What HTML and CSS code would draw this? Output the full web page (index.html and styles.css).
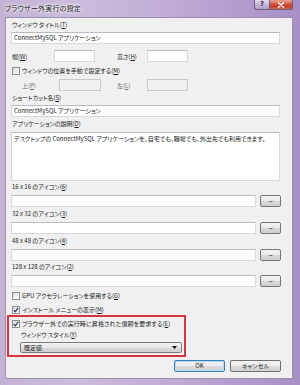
FILE: index.html
```html
<!DOCTYPE html>
<html lang="ja">
<head>
<meta charset="utf-8">
<title>ブラウザー外実行の設定</title>
<link rel="stylesheet" href="styles.css">
</head>
<body>
<div class="window">
  <div class="titlebar">
    <span class="title">ブラウザー外実行の設定</span>
    <div class="caption">
      <span class="cap-help">?</span>
      <span class="cap-close">
        <svg width="8" height="6" viewBox="0 0 8 6"><path d="M1.5 0.8 L6.5 5.2 M6.5 0.8 L1.5 5.2" stroke="#fff" stroke-width="1.4" stroke-linecap="round"/></svg>
      </span>
    </div>
  </div>
  <div class="client">
    <div class="lbl l-title">ウィンドウ タイトル(<u>T</u>)</div>
    <div class="tb t-title">ConnectMySQL アプリケーション</div>

    <div class="row r-size">
      <span class="rl rl-w">幅(<u>W</u>)</span>
      <div class="tb small"></div>
      <span class="rl rl-h">高さ(<u>H</u>)</span>
      <div class="tb small"></div>
    </div>

    <div class="crow cr-pos">
      <span class="cb"></span>
      <span class="ctext">ウィンドウの位置を手動で設定する(<u>M</u>)</span>
    </div>

    <div class="row r-pos">
      <span class="rl dis rl-p">上(<u>P</u>)</span>
      <div class="tb small dis-tb wide1"></div>
      <span class="rl dis rl-l">左(<u>L</u>)</span>
      <div class="tb small dis-tb"></div>
    </div>

    <div class="lbl l-short">ショートカット名(<u>S</u>)</div>
    <div class="tb t-short">ConnectMySQL アプリケーション</div>

    <div class="lbl l-desc">アプリケーションの説明(<u>D</u>)</div>
    <div class="tb area">デスクトップの ConnectMySQL アプリケーションを、自宅でも、職場でも、外出先でも利用できます。</div>

    <div class="lbl l-i16">16 x 16 のアイコン(<u>6</u>)</div>
    <div class="row r-icon">
      <div class="tb grow"></div>
      <span class="dots">...</span>
    </div>
    <div class="lbl l-icon">32 x 32 のアイコン(<u>3</u>)</div>
    <div class="row r-icon">
      <div class="tb grow"></div>
      <span class="dots">...</span>
    </div>
    <div class="lbl l-icon">48 x 48 のアイコン(<u>4</u>)</div>
    <div class="row r-icon">
      <div class="tb grow"></div>
      <span class="dots">...</span>
    </div>
    <div class="lbl l-i128">128 x 128 のアイコン(<u>2</u>)</div>
    <div class="row r-icon">
      <div class="tb grow"></div>
      <span class="dots">...</span>
    </div>

    <div class="crow cr-gpu">
      <span class="cb"></span>
      <span class="ctext">GPU アクセラレーションを使用する(<u>G</u>)</span>
    </div>
    <div class="crow cr-inst">
      <span class="cb">
        <svg width="6" height="6" viewBox="0 0 6 6"><path d="M0.8 3.2 L2.3 4.9 L5.2 0.9" fill="none" stroke="#2a3a6e" stroke-width="1.2"/></svg>
      </span>
      <span class="ctext">インストール メニューの表示(<u>M</u>)</span>
    </div>

    <div class="redbox">
      <div class="crow cr-elev">
        <span class="cb">
          <svg width="6" height="6" viewBox="0 0 6 6"><path d="M0.8 3.2 L2.3 4.9 L5.2 0.9" fill="none" stroke="#2a3a6e" stroke-width="1.2"/></svg>
        </span>
        <span class="ctext">ブラウザー外での実行時に昇格された信頼を要求する(<u>E</u>)</span>
      </div>
      <div class="lbl l-style">ウィンドウ スタイル(<u>Y</u>)</div>
      <div class="select">
        <span>既定値</span>
        <svg width="5" height="3" viewBox="0 0 5 3"><path d="M0 0 H5 L2.5 3 Z" fill="#000"/></svg>
      </div>
    </div>

    <div class="buttons">
      <span class="btn default">OK</span>
      <span class="btn">キャンセル</span>
    </div>
  </div>
</div>
</body>
</html>
```

FILE: styles.css
```css
html, body {
  margin: 0;
  padding: 0;
}
body {
  width: 300px;
  height: 385px;
  overflow: hidden;
  font-family: "Noto Sans CJK JP", "Noto Sans", sans-serif;
  font-feature-settings: "palt";
  color: #1a1a1a;
}
u { text-decoration-thickness: 0.5px; text-underline-offset: 1px; }

.window {
  width: 300px;
  height: 385px;
  box-sizing: border-box;
  padding: 0 7px 6px 5px;
  display: flex;
  flex-direction: column;
  background: linear-gradient(to right, #c3b2d6 0%, #cbbcdc 25%, #bea9d4 60%, #a78fc4 100%);
}

.titlebar {
  height: 17px;
  display: flex;
  align-items: flex-start;
  flex: none;
}
.title {
  font-size: 7px;
  line-height: 17px;
  color: #111;
  letter-spacing: 0.2px;
  text-shadow: 0 0 2px #fff, 0 0 3px #fff, 0 0 4px #fff;
}
.caption {
  margin-left: auto;
  display: flex;
}
.cap-help, .cap-close {
  height: 10px;
  box-sizing: border-box;
  border: 1px solid #6d5f80;
  border-top: none;
  display: flex;
  align-items: center;
  justify-content: center;
}
.cap-help {
  width: 15px;
  border-right: none;
  border-bottom-left-radius: 3px;
  background: linear-gradient(#e6deee, #c3b6d3 50%, #b0a1c4);
  font-size: 7px;
  font-weight: bold;
  color: #3a3050;
  line-height: 9px;
  font-family: "DejaVu Sans", sans-serif;
}
.cap-close {
  width: 24px;
  border-bottom-right-radius: 3px;
  background: linear-gradient(#e9a393, #d0503c 50%, #c23a28 75%, #d66a50);
}

.client {
  flex: 1;
  background: #f0f0f0;
  border: 1px solid #9a8fae;
  display: flex;
  flex-direction: column;
  padding: 0 12px 0 5px;
  font-size: 6px;
}

.lbl {
  height: 8px;
  line-height: 8px;
  margin-left: 1px;
  white-space: nowrap;
}
.tb {
  height: 12px;
  box-sizing: border-box;
  border: 1px solid #d6d8dd;
  border-top-color: #b9bcc4;
  background: #fff;
  line-height: 10px;
  padding-left: 2px;
  white-space: nowrap;
  overflow: hidden;
}

.l-title { margin-top: 3px; }
.t-title { margin-top: 3px; }

.row {
  display: flex;
  align-items: center;
  height: 12px;
}
.rl { white-space: nowrap; }
.small { width: 41px; }
.r-size { margin-top: 6px; }
.rl-w { margin-left: 1px; width: 42px; }
.rl-h { margin-left: 22px; width: 30px; }

.crow {
  display: flex;
  align-items: center;
  height: 9px;
}
.cb {
  width: 8px;
  height: 8px;
  box-sizing: border-box;
  border: 1px solid #8f8f8f;
  background: linear-gradient(135deg, #d8d8d8, #f4f4f4 70%, #fff);
  margin-left: 1px;
  display: flex;
  align-items: center;
  justify-content: center;
  flex: none;
}
.ctext {
  margin-left: 2px;
  white-space: nowrap;
}
.cr-pos { margin-top: 4px; }

.r-pos { margin-top: 4px; }
.dis { color: #6d6d6d; }
.dis-tb {
  background: #f0f0f0;
  border-color: #c8c8c8;
}
.rl-p { margin-left: 11px; width: 37px; }
.wide1 { width: 42px; }
.rl-l { margin-left: 16px; width: 30px; }

.l-short { margin-top: 3px; }
.t-short { margin-top: 3px; }
.l-desc { margin-top: 3px; }
.area {
  margin-top: 4px;
  height: 49px;
  line-height: 9px;
  padding-top: 1px;
}

.l-i16 { margin-top: 2px; }
.l-icon { margin-top: 3px; }
.l-i128 { margin-top: 2px; }
.r-icon { margin-top: 4px; }
.grow { flex: 1; }
.dots {
  width: 21px;
  height: 12px;
  margin-left: 4px;
  margin-right: -1px;
  box-sizing: border-box;
  border: 1px solid #767676;
  border-radius: 2px;
  background: linear-gradient(#f4f4f4, #e8e8e8 50%, #d8d8d8 51%, #cfcfcf);
  font-size: 5px;
  line-height: 8px;
  text-align: center;
  font-weight: bold;
  letter-spacing: -0.5px;
  flex: none;
}

.cr-gpu { margin-top: 4px; }
.cr-inst { margin-top: 5px; }

.redbox {
  margin-top: 1px;
  margin-left: -4px;
  width: 179px;
  box-sizing: border-box;
  border: 2px solid #d7333d;
  padding-bottom: 2px;
  display: flex;
  flex-direction: column;
}
.cr-elev { margin-top: 2px; }
.cr-elev .cb { margin-left: 3px; }
.cr-elev .ctext { letter-spacing: 0.1px; }
.l-style { margin-top: 3px; margin-left: 12px; }
.select {
  margin-top: 3px;
  margin-left: 11px;
  width: 162px;
  height: 11px;
  box-sizing: border-box;
  border: 1px solid #7a7a7a;
  border-radius: 2px;
  background: linear-gradient(#f3f3f3, #e6e6e6 50%, #d9d9d9 51%, #d2d2d2);
  display: flex;
  align-items: center;
  justify-content: space-between;
  padding: 0 4px 0 3px;
  line-height: 9px;
}

.buttons {
  margin-top: 3px;
  margin-right: -1px;
  display: flex;
  justify-content: flex-end;
  gap: 5px;
}
.btn {
  width: 51px;
  height: 12px;
  box-sizing: border-box;
  border: 1px solid #707070;
  border-radius: 2px;
  background: linear-gradient(#f2f2f2, #ebebeb 50%, #dddddd 51%, #cfcfcf);
  text-align: center;
  line-height: 10px;
  font-size: 6px;
}
.btn.default {
  border-color: #3c7fb1;
  box-shadow: inset 0 0 0 1px #a8e0f8;
}
```
